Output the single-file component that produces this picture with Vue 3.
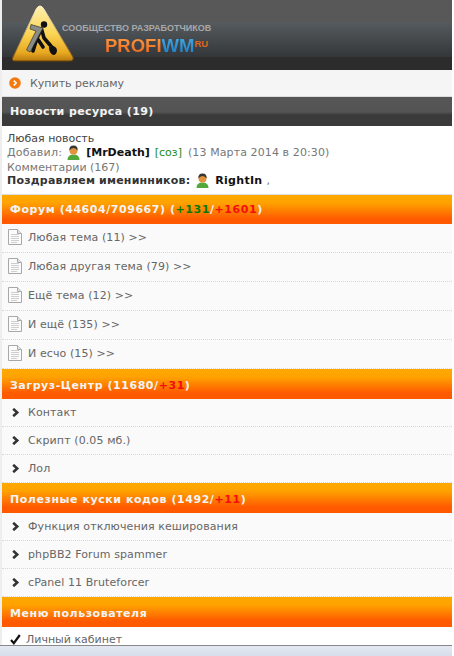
<script setup>
const sections = [
	{
		title: 'Форум (44604/709667) (',
		green: '+131',
		sep: '/',
		red: '+1601',
		end: ')',
		icon: 'doc',
		rows: ['Любая тема (11) >>', 'Любая другая тема (79) >>', 'Ещё тема (12) >>', 'И ещё (135) >>', 'И есчо (15) >>']
	},
	{
		title: 'Загруз-Центр (11680/',
		red: '+31',
		end: ')',
		icon: 'arrow',
		rows: ['Контакт', 'Скрипт (0.05 мб.)', 'Лол']
	},
	{
		title: 'Полезные куски кодов (1492/',
		red: '+11',
		end: ')',
		icon: 'arrow',
		rows: ['Функция отключения кеширования', 'phpBB2 Forum spammer', 'cPanel 11 Bruteforcer']
	}
]
</script>

<template>
	<div class="page">
		<div class="head">
			<svg class="logo" width="64" height="58" viewBox="0 0 64 58">
				<defs>
					<linearGradient id="tri" x1="0" y1="0" x2="0" y2="1">
						<stop offset="0" stop-color="#fff0b0" />
						<stop offset="0.5" stop-color="#fbd555" />
						<stop offset="0.85" stop-color="#e8a820" />
						<stop offset="1" stop-color="#b87a10" />
					</linearGradient>
					<linearGradient id="edge" x1="0" y1="0" x2="0" y2="1">
						<stop offset="0" stop-color="#fff6d0" />
						<stop offset="1" stop-color="#6a4406" />
					</linearGradient>
				</defs>
				<path d="M29 1 Q31 1 32.5 3.5 L62 52 Q63 56 59 56 L4 56 Q0 56 2 52 L25.5 3.5 Q27 1 29 1Z" fill="url(#tri)" stroke="url(#edge)" />
				<circle cx="33" cy="19.5" r="3.2" fill="#111" />
				<path d="M30.5 24 L26 33 L22 46 M26 33 L32 42 M30.5 24 L33 33 L39 40" fill="none" stroke="#111" stroke-width="3.6" stroke-linecap="round" stroke-linejoin="round" />
				<path d="M20 19.5 L32 23 L19 47 L15.5 45 L25 26 L19 24Z" fill="#8c8c86" stroke="#333" stroke-width="0.7" />
				<path d="M33 33 L42 42" stroke="#111" stroke-width="1.8" />
				<path d="M38 42 Q44 39 46 45 Q46 50 42 50 Q38 48 38 42Z" fill="#111" />
			</svg>
			<div class="brand">
				<div class="slogan">СООБЩЕСТВО РАЗРАБОТЧИКОВ</div>
				<div class="name"><span class="profi">PROFI</span><span class="wm">WM</span><span class="ru">RU</span></div>
			</div>
		</div>

		<div class="ad">
			<span class="bullet"><svg width="12" height="12" viewBox="0 0 12 12"><circle cx="6" cy="6" r="5.8" fill="#f47a10" /><path d="M4.8 3.6 L7.2 6 L4.8 8.4" fill="none" stroke="#fff" stroke-width="1.5" /></svg></span>
			<span>Купить рекламу</span>
		</div>

		<div class="title dark">Новости ресурса (19)</div>
		<div class="news">
			<div class="any">Любая новость</div>
			<div class="line">
				<span class="added">Добавил:</span>
				<svg class="user" width="13" height="15" viewBox="0 0 13 15"><path d="M0.5 15 Q0.5 9.5 6.5 9.5 Q12.5 9.5 12.5 15Z" fill="#52a83a" /><circle cx="6.5" cy="5.5" r="4" fill="#e0923c" /><path d="M2.4 5.5 Q2 0.5 6.5 0.5 Q11 0.5 10.6 5.5 Q9 3 6.5 3 Q4 3 2.4 5.5Z" fill="#3a3632" /></svg>
				<b class="nick">[MrDeath]</b>
				<span class="soz">[соз]</span>
				<span class="date">(13 Марта 2014 в 20:30)</span>
			</div>
			<div class="comments">Комментарии (167)</div>
			<div class="birth">
				<b class="cong">Поздравляем именинников:</b>
				<svg class="user" width="13" height="15" viewBox="0 0 13 15"><path d="M0.5 15 Q0.5 9.5 6.5 9.5 Q12.5 9.5 12.5 15Z" fill="#52a83a" /><circle cx="6.5" cy="5.5" r="4" fill="#e0923c" /><path d="M2.4 5.5 Q2 0.5 6.5 0.5 Q11 0.5 10.6 5.5 Q9 3 6.5 3 Q4 3 2.4 5.5Z" fill="#3a3632" /></svg>
				<b class="nick right">RightIn</b>
				<span>,</span>
			</div>
		</div>

		<template v-for="(s, i) in sections" :key="s.title">
			<div class="title orange" :class="{short: i == 0}">{{ s.title }}<span v-if="s.green" class="green">{{ s.green }}</span>{{ s.sep }}<span class="red">{{ s.red }}</span>{{ s.end }}</div>
			<div class="rows" :class="s.icon">
				<div v-for="r in s.rows" :key="r" class="row">
					<svg v-if="s.icon == 'doc'" width="14" height="16" viewBox="0 0 14 16"><path d="M0.5 0.5 H9.5 L13.5 4.5 V15.5 H0.5Z" fill="#fbfbfb" stroke="#a8a8a8" /><path d="M9.5 0.5 V4.5 H13.5" fill="#e4e4e4" stroke="#a8a8a8" /><path d="M3 5.5 H11 M3 7.5 H11 M3 9.5 H11 M3 11.5 H11 M3 13.5 H9" stroke="#cfcfcf" /></svg>
					<svg v-else width="8" height="9" viewBox="0 0 8 9"><path d="M1.2 0.8 L5.2 4.5 L1.2 8.2" fill="none" stroke="#333" stroke-width="2.6" /></svg>
					<span class="label">{{ r }}</span>
				</div>
			</div>
		</template>

		<div class="title orange">Меню пользователя</div>
		<div class="menu">
			<svg width="11" height="11" viewBox="0 0 11 11"><path d="M1 6 L3.8 9.2 L9.8 1" fill="none" stroke="#111" stroke-width="2.2" /></svg>
			<span>Личный кабинет</span>
		</div>

		<div class="bottom"></div>
	</div>
</template>

<style>
	html, body{
		margin: 0;
		height: 100%;
		overflow: hidden;
		background: #fff;
	}
</style>

<style scoped>
	.page{
		width: 450px;
		margin-left: 2px;
		box-shadow: -2px 0 0 #eee;
		font-family: "DejaVu Sans", Verdana, sans-serif;
		font-size: 11px;
		color: #666;
		background: #fff;
	}

	.head{
		height: 70px;
		display: flex;
		background: linear-gradient(#585858 0, #585858 22px, #565b5f 22px, #33373a 57px, #2c2c2c 57px);
	}
	.logo{
		margin: 5px 0 0 9px;
	}
	.brand{
		margin-left: -13px;
		padding-top: 22px;
		font-family: "Liberation Sans", Arial, sans-serif;
		font-weight: bold;
	}
	.slogan{
		font-size: 9px;
		line-height: 12px;
		color: #a8a8a8;
		white-space: nowrap;
	}
	.name{
		margin: 3px 0 0 43px;
		font-size: 18.5px;
		line-height: 18px;
		white-space: nowrap;
	}
	.profi{
		background: linear-gradient(#ffa24a, #ea5e14);
		-webkit-background-clip: text;
		background-clip: text;
		color: transparent;
	}
	.wm{
		background: linear-gradient(#4ab0ea, #1878c0);
		-webkit-background-clip: text;
		background-clip: text;
		color: transparent;
	}
	.ru{
		position: relative;
		top: -5px;
		font-size: 9.5px;
		color: #d9661c;
	}

	.ad{
		height: 26px;
		display: flex;
		align-items: center;
		gap: 9px;
		padding-left: 7px;
		background: #f5f5f5;
		border-bottom: 1px solid #ddd;
		color: #666;
	}
	.bullet{
		display: flex;
	}

	.title{
		padding-left: 8px;
		font-weight: bold;
		color: #f4f4f4;
		white-space: nowrap;
		letter-spacing: 0.55px;
	}
	.dark{
		height: 29px;
		line-height: 29px;
		letter-spacing: 0.4px;
		background: linear-gradient(#565656 0, #545454 15px, #3a3a3a 18px);
	}
	.orange{
		height: 30px;
		line-height: 34px;
		background: linear-gradient(#ffa800 0, #ffa200 8px, #ff5a00 24px);
	}
	.orange.short{
		height: 29px;
		line-height: 30px;
	}
	.green{
		color: #0a7a0a;
	}
	.red{
		color: #f01010;
	}

	.news{
		height: 69px;
		padding: 6px 0 0 5px;
		box-sizing: border-box;
		border-bottom: 1px solid #ddd;
		color: #777;
		line-height: 13px;
	}
	.any{
		color: #444;
	}
	.line, .birth{
		display: flex;
		align-items: center;
		height: 15px;
	}
	.added{
		letter-spacing: 0.25px;
	}
	.line .user{
		margin-left: 5px;
	}
	.line .nick{
		margin-left: 6px;
	}
	.soz{
		margin-left: 5px;
		color: #1a8a1a;
	}
	.date{
		margin-left: 6px;
		letter-spacing: 0.1px;
	}
	.comments{
		margin-top: 1px;
	}
	.birth .user{
		margin-left: 6px;
	}
	.cong{
		color: #333;
		letter-spacing: 0.2px;
	}
	.birth{
		margin-top: -1px;
	}
	.news .nick{
		color: #111;
	}
	.right{
		margin: 0 4px 0 6px;
		letter-spacing: 0.3px;
	}

	.row{
		display: flex;
		align-items: center;
		background: #fafafa;
		border-bottom: 1px dotted #d8d8d8;
		box-sizing: border-box;
	}
	.label{
		letter-spacing: 0.1px;
	}
	.doc .row{
		height: 29px;
		gap: 6px;
		padding: 0 0 2px 6px;
	}
	.arrow .row{
		height: 28px;
		gap: 8px;
		padding-left: 10px;
	}

	.menu{
		height: 24px;
		display: flex;
		align-items: center;
		gap: 5px;
		padding-left: 8px;
		color: #666;
	}

	.bottom{
		position: fixed;
		left: 0;
		right: 2px;
		bottom: 0;
		height: 10px;
		background: linear-gradient(#e4e8f2, #d8ddeb);
		border-top: 1px solid #888;
	}
</style>
